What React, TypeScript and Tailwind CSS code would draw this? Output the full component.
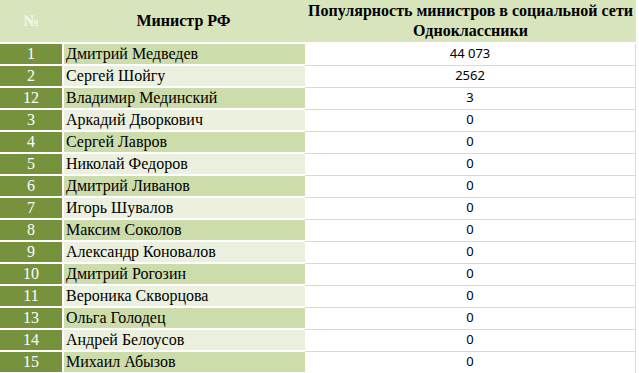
const rows: [string, string, string][] = [
  ['1', 'Дмитрий Медведев', '44 073'],
  ['2', 'Сергей Шойгу', '2562'],
  ['12', 'Владимир Мединский', '3'],
  ['3', 'Аркадий Дворкович', '0'],
  ['4', 'Сергей Лавров', '0'],
  ['5', 'Николай Федоров', '0'],
  ['6', 'Дмитрий Ливанов', '0'],
  ['7', 'Игорь Шувалов', '0'],
  ['8', 'Максим Соколов', '0'],
  ['9', 'Александр Коновалов', '0'],
  ['10', 'Дмитрий Рогозин', '0'],
  ['11', 'Вероника Скворцова', '0'],
  ['13', 'Ольга Голодец', '0'],
  ['14', 'Андрей Белоусов', '0'],
  ['15', 'Михаил Абызов', '0'],
];

export default function App() {
  return (
    <div className="w-[639px] h-[373px] bg-white overflow-hidden font-['Liberation_Serif',serif] text-black">
      <div className="flex w-[636px] h-[42px] bg-[#d8e4bc] font-bold text-[16px]">
        <div className="w-[62px] flex items-center justify-center text-[#f4f6ee]">№</div>
        <div className="w-[243px] flex items-center justify-center">Министр РФ</div>
        <div className="w-[331px] flex flex-col items-center justify-center leading-[20px]">
          <span>Популярность министров в социальной сети</span>
          <span>Одноклассники</span>
        </div>
      </div>
      <div className="mt-[2px]">
        {rows.map(([n, name, v], i) => (
          <div key={n} className="flex h-[22px]">
            <div className="w-[62px] h-[20px] bg-[#76923c] text-white text-[16px] flex items-center justify-center">
              {n}
            </div>
            <div
              className={`ml-[2px] w-[241px] h-[20px] flex items-center pl-[2px] text-[16px] ${
                i % 2 === 0 ? 'bg-[#cddcab]' : 'bg-[#ebf1de]'
              }`}
            >
              {name}
            </div>
            <div className="w-[331px] h-[22px] border-b border-r border-[#d9d9d9] flex items-center justify-center pb-[2px] font-sans text-[13px]">
              {v}
            </div>
          </div>
        ))}
      </div>
    </div>
  );
}
